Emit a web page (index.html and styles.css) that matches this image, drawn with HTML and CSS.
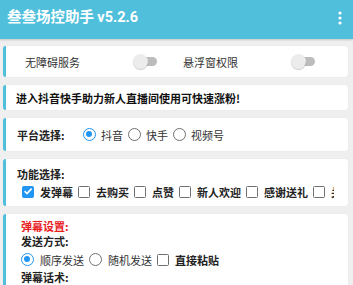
FILE: index.html
```html
<!DOCTYPE html>
<html lang="zh">
<head>
<meta charset="utf-8">
<link rel="stylesheet" href="styles.css">
</head>
<body>
<header class="bar">
  <div class="title">叁叁场控助手 <span class="ver">v5.2.6</span></div>
  <svg class="menu" width="4" height="14" viewBox="0 0 4 14"><circle cx="2" cy="2" r="1.6" fill="#fff"/><circle cx="2" cy="7" r="1.6" fill="#fff"/><circle cx="2" cy="12" r="1.6" fill="#fff"/></svg>
</header>
<main class="main">
  <section class="card perms">
    <div class="perm"><span class="perm-label">无障碍服务</span><span class="switch"><span class="track"></span><span class="thumb"></span></span></div>
    <div class="perm"><span class="perm-label">悬浮窗权限</span><span class="switch"><span class="track"></span><span class="thumb"></span></span></div>
  </section>
  <section class="card notice">进入抖音快手助力新人直播间使用可快速涨粉!</section>
  <section class="card platform">
    <span class="plat-label">平台选择:</span>
    <span class="opt"><span class="radio on"></span><span class="txt">抖音</span></span>
    <span class="opt"><span class="radio"></span><span class="txt">快手</span></span>
    <span class="opt"><span class="radio"></span><span class="txt">视频号</span></span>
  </section>
  <section class="card funcs">
    <div class="head">功能选择:</div>
    <div class="scroller">
      <div class="checks">
        <span class="opt"><span class="check on"><svg width="12" height="12" viewBox="0 0 12 12"><path d="M2.6 6.2 L5 8.5 L9.6 3.6" fill="none" stroke="#fff" stroke-width="1.6"/></svg></span><span class="txt b">发弹幕</span></span>
        <span class="opt"><span class="check"></span><span class="txt b">去购买</span></span>
        <span class="opt"><span class="check"></span><span class="txt b">点赞</span></span>
        <span class="opt"><span class="check"></span><span class="txt b">新人欢迎</span></span>
        <span class="opt"><span class="check"></span><span class="txt b">感谢送礼</span></span>
        <span class="opt"><span class="check"></span><span class="txt b">关注</span></span>
      </div>
    </div>
  </section>
  <section class="card danmu">
    <div class="head red">弹幕设置:</div>
    <div class="head">发送方式:</div>
    <div class="row">
      <span class="opt"><span class="radio on"></span><span class="txt">顺序发送</span></span>
      <span class="opt"><span class="radio"></span><span class="txt">随机发送</span></span>
      <span class="opt"><span class="check"></span><span class="txt b">直接粘贴</span></span>
    </div>
    <div class="head">弹幕话术:</div>
  </section>
</main>
</body>
</html>
```
FILE: styles.css
```css
* { box-sizing: border-box; }
html, body { margin: 0; padding: 0; }
body {
  width: 353px;
  height: 285px;
  overflow: hidden;
  background: #efefef;
  font-family: "Noto Sans CJK SC", "Noto Sans", sans-serif;
  font-size: 11px;
  color: #222;
}
.bar {
  height: 39px;
  background: #4fbfdc;
  display: flex;
  align-items: center;
  justify-content: space-between;
  padding: 0 11px 5px 7px;
  box-shadow: 0 1px 2px rgba(0,0,0,0.18);
  position: relative;
}
.title {
  color: #fff;
  font-size: 14.5px;
  font-weight: 700;
  line-height: 1;
  white-space: nowrap;
}
.ver { font-family: Roboto, "Noto Sans", sans-serif; font-weight: 700; }
.menu { display: block; margin-top: 1px; }
.main {
  display: flex;
  flex-direction: column;
  gap: 8px;
  padding: 7px 5px 0 3px;
}
.card {
  background: #fff;
  border-left: 3px solid #4fbfdc;
  border-radius: 3px;
  box-shadow: 0 0 1px rgba(0,0,0,0.12);
}
.perms {
  height: 31px;
  display: flex;
  align-items: center;
  padding-left: 19px;
  color: #333;
}
.perm {
  width: 158px;
  display: flex;
  align-items: center;
}
.perm-label { width: 108px; }
.switch {
  position: relative;
  width: 25px;
  height: 15px;
}
.track {
  position: absolute;
  left: 3px; top: 3px;
  width: 21px; height: 9px;
  border-radius: 5px;
  background: #bcbcbc;
}
.thumb {
  position: absolute;
  left: 0; top: 0;
  width: 15px; height: 15px;
  border-radius: 50%;
  background: #ececec;
  box-shadow: 0 1px 1px rgba(0,0,0,0.2);
}
.notice {
  height: 25px;
  display: flex;
  align-items: center;
  padding-left: 10px;
  font-weight: 700;
  color: #111;
}
.platform {
  height: 33px;
  display: flex;
  align-items: center;
  padding-left: 11px;
}
.plat-label { font-weight: 700; width: 66px; }
.opt {
  display: inline-flex;
  align-items: center;
  margin-right: 5px;
  white-space: nowrap;
  flex-shrink: 0;
}
.txt { margin-left: 5px; color: #333; }
.txt.b { font-weight: 700; color: #222; }
.radio {
  width: 13px; height: 13px;
  border-radius: 50%;
  border: 1.5px solid #6f6f6f;
  display: inline-block;
  position: relative;
  flex-shrink: 0;
}
.radio.on { border-color: #2196f3; }
.radio.on::after {
  content: "";
  position: absolute;
  left: 2px; top: 2px;
  width: 6px; height: 6px;
  border-radius: 50%;
  background: #2196f3;
}
.check {
  width: 12px; height: 12px;
  border: 1.5px solid #6f6f6f;
  border-radius: 1.5px;
  display: inline-block;
  position: relative;
  flex-shrink: 0;
}
.check.on { background: #2196f3; border-color: #2196f3; }
.check.on svg { position: absolute; left: -1.5px; top: -1.5px; }
.funcs {
  height: 47px;
  padding: 7px 14px 0 11px;
}
.head { font-weight: 700; line-height: 16px; }
.scroller {
  overflow: hidden;
  margin-top: 1px;
}
.checks {
  display: flex;
  white-space: nowrap;
  padding-left: 5px;
  height: 17px;
  align-items: center;
}
.checks .opt { margin-right: 5px; }
.checks .txt { margin-left: 6px; }
.danmu {
  height: 90px;
  padding: 5px 11px 0 15px;
}
.danmu .head { line-height: 15px; }
.head.red { color: #e8201e; }
.row {
  display: flex;
  align-items: center;
  height: 19px;
  margin: 1px 0 1px;
}
.row .txt { margin-left: 6px; }
```
